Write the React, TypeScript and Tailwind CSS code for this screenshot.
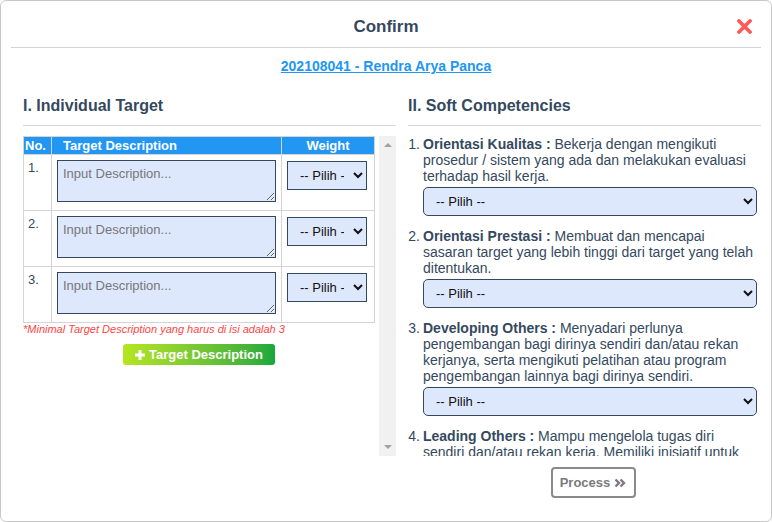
import React from "react";

const rows = [1, 2, 3];

const competencies = [
  {
    term: "Orientasi Kualitas :",
    text: " Bekerja dengan mengikuti prosedur / sistem yang ada dan melakukan evaluasi terhadap hasil kerja.",
  },
  {
    term: "Orientasi Prestasi :",
    text: " Membuat dan mencapai sasaran target yang lebih tinggi dari target yang telah ditentukan.",
  },
  {
    term: "Developing Others :",
    text: " Menyadari perlunya pengembangan bagi dirinya sendiri dan/atau rekan kerjanya, serta mengikuti pelatihan atau program pengembangan lainnya bagi dirinya sendiri.",
  },
  {
    term: "Leading Others :",
    text: " Mampu mengelola tugas diri sendiri dan/atau rekan kerja. Memiliki inisiatif untuk mengarahkan dan membimbing rekan kerja.",
  },
];

export default function App() {
  return (
    <div
      className="w-[772px] h-[522px] bg-white"
      style={{ fontFamily: '"Liberation Sans", Arial, sans-serif' }}
    >
      <div className="relative w-[772px] h-[522px] border border-[#c9c9c9] rounded-[6px] overflow-hidden flex flex-col">
        {/* Header */}
        <div className="mx-[10px] h-[47px] pt-[14px] border-b border-[#d3d3d3] text-center">
          <span className="text-[17px] leading-[20px] font-bold text-[#34495e]">Confirm</span>
        </div>
        <button className="absolute right-[19px] top-[18px] w-[15px] h-[15px]" aria-label="close">
          <svg viewBox="0 0 15 15" width="15" height="15">
            <path d="M2 2 L13 13 M13 2 L2 13" stroke="#ff5a5a" strokeWidth="3.6" strokeLinecap="square" />
          </svg>
        </button>

        {/* Link */}
        <div className="mt-[10px] text-center leading-[16px]">
          <a href="#" className="text-[14px] font-bold text-[#2196f3] underline">
            202108041 - Rendra Arya Panca
          </a>
        </div>

        {/* Columns */}
        <div className="flex gap-[12px] pl-[22px] pr-[10px] mt-[22px]">
          {/* Left column */}
          <div className="w-[373px] flex flex-col">
            <div className="text-[16px] leading-[20px] font-bold text-[#34495e] pb-[9px] border-b border-[#d8d8d8]">
              I. Individual Target
            </div>
            <div className="mt-[10px] h-[320px] flex">
              <div className="flex-1 flex flex-col">
                <table className="table-fixed border-collapse w-[351px]">
                  <colgroup>
                    <col className="w-[28px]" />
                    <col className="w-[230px]" />
                    <col className="w-[93px]" />
                  </colgroup>
                  <thead>
                    <tr className="bg-[#2196f3] text-white text-[13px] leading-[16px] font-bold">
                      <th className="border border-[#d4d4d4] h-[18px] p-0 pl-[1px] text-left">No.</th>
                      <th className="border border-[#d4d4d4] h-[18px] p-0 pl-[11px] text-left">Target Description</th>
                      <th className="border border-[#d4d4d4] h-[18px] p-0 text-center">Weight</th>
                    </tr>
                  </thead>
                  <tbody>
                    {rows.map((n) => (
                      <tr key={n}>
                        <td className="border border-[#d4d4d4] h-[56px] align-top p-0 pl-[4px] pt-[5px] text-[13px] leading-[16px] text-[#34495e]">
                          {n}.
                        </td>
                        <td className="border border-[#d4d4d4] h-[56px] align-top p-0 pl-[5px] pt-[5px]">
                          <textarea
                            placeholder="Input Description..."
                            className="block w-[219px] h-[42px] bg-[#dde8fc] border border-[#34495e] px-[5px] pt-[5px] pb-[2px] text-[13px] leading-[16px] text-[#333] placeholder:text-[#777] outline-none"
                          />
                        </td>
                        <td className="border border-[#d4d4d4] h-[56px] align-top p-0 pl-[5px] pt-[6px]">
                          <select className="block w-[80px] h-[29px] bg-[#dde8fc] border border-[#34495e] pl-[8px] pr-[6px] text-[13px] text-[#111] outline-none">
                            <option>-- Pilih --</option>
                          </select>
                        </td>
                      </tr>
                    ))}
                  </tbody>
                </table>
                <div className="italic text-[11px] leading-[13px] text-[#ff4545]">
                  *Minimal Target Description yang harus di isi adalah 3
                </div>
                <div className="w-[351px] flex justify-center mt-[8px]">
                  <button className="h-[21px] w-[152px] rounded-[3px] bg-gradient-to-r from-[#b5e61e] to-[#15a83b] text-white text-[13px] font-bold flex items-center justify-center gap-[3px]">
                    <svg viewBox="0 0 12 12" width="12" height="12">
                      <path d="M6 1 V11 M1 6 H11" stroke="#ffffff" strokeWidth="3" />
                    </svg>
                    <span>Target Description</span>
                  </button>
                </div>
              </div>
              {/* scrollbar */}
              <div className="w-[17px] h-[320px] bg-[#f1f1f1] flex flex-col justify-between items-center py-[6px]">
                <svg viewBox="0 0 8 5" width="8" height="5">
                  <path d="M0 5 L4 1 L8 5 Z" fill="#a3a3a3" />
                </svg>
                <svg viewBox="0 0 8 5" width="8" height="5">
                  <path d="M0 0 L8 0 L4 4 Z" fill="#a3a3a3" />
                </svg>
              </div>
            </div>
          </div>

          {/* Right column */}
          <div className="flex-1 flex flex-col">
            <div className="text-[16px] leading-[20px] font-bold text-[#34495e] pb-[9px] border-b border-[#d8d8d8]">
              II. Soft Competencies
            </div>
            <div className="mt-[10px] h-[320px] overflow-hidden flex flex-col gap-[12px]">
              {competencies.map((c, i) => (
                <div key={i} className="flex text-[14px] leading-[16px] text-[#34495e]">
                  <span className="w-[15px] shrink-0 text-right pr-[3px]">{i + 1}.</span>
                  <div className="flex-1 pr-[4px]">
                    <div>
                      <b>{c.term}</b>
                      {c.text}
                    </div>
                    <select className="mt-[3px] block w-full h-[29px] bg-[#dde8fc] border border-[#34495e] rounded-[5px] pl-[8px] text-[13px] text-[#111] outline-none">
                      <option>-- Pilih --</option>
                    </select>
                  </div>
                </div>
              ))}
            </div>
            <div className="flex justify-center pl-[17px] mt-[11px]">
              <button className="h-[31px] w-[85px] border-2 border-[#8a8a8a] rounded-[4px] text-[13px] font-bold text-[#7a7a7a] flex items-center justify-center gap-[4px]">
                <span>Process</span>
                <svg viewBox="0 0 12 10" width="12" height="10">
                  <path d="M1.5 1.5 L5 5 L1.5 8.5 M6.5 1.5 L10 5 L6.5 8.5" fill="none" stroke="#7a7a7a" strokeWidth="2.4" />
                </svg>
              </button>
            </div>
          </div>
        </div>
      </div>
    </div>
  );
}
